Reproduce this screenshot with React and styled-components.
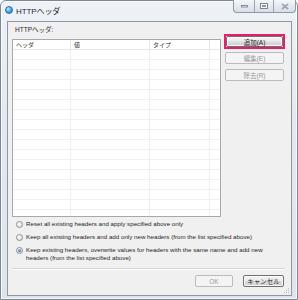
import React from 'react';
import styled, { createGlobalStyle } from 'styled-components';

const GlobalStyle = createGlobalStyle`
	html, body {
		margin: 0;
		padding: 0;
		background: #ffffff;
	}
	body {
		width: 298px;
		height: 300px;
		overflow: hidden;
		font-family: "Liberation Sans", "Noto Sans CJK JP", sans-serif;
	}
	* {
		box-sizing: border-box;
	}
`;

// Window frame (Aero, inactive)
const Window = styled.div`
	width: 298px;
	height: 300px;
	border: 1px solid #7d8893;
	border-radius: 6px 6px 0 0;
	background: linear-gradient(180deg, #eef2f7 0%, #e2e9f0 40%, #dde4ec 100%);
	box-shadow: inset 0 0 0 1px rgba(255, 255, 255, 0.7);
	display: flex;
	flex-direction: column;
	padding: 0 5px 3px 6px;
`;

const TitleBar = styled.div`
	height: 20px;
	display: flex;
	align-items: center;
`;

const TitleIcon = styled.span`
	width: 8px;
	height: 8px;
	border-radius: 50%;
	background: radial-gradient(circle at 35% 30%, #c9ecff 0%, #4fb0ec 45%, #1669b8 100%);
	border: 1px solid #2c6aa6;
	margin-left: -2px;
	margin-top: -2px;
`;

const TitleText = styled.span`
	font-size: 8px;
	color: #1f2a36;
	margin-left: 3px;
	margin-top: -2px;
	letter-spacing: -0.1px;
`;

const CaptionButtons = styled.div`
	margin-left: auto;
	margin-right: -4px;
	align-self: flex-start;
	margin-top: -1px;
	display: flex;
	height: 13px;
	border: 1px solid #8e9aa7;
	border-top: none;
	border-radius: 0 0 4px 4px;
	overflow: hidden;
	background: linear-gradient(180deg, #f4f7fa 0%, #e3e9ef 55%, #d6dee7 100%);
`;

const CaptionButton = styled.div`
	width: ${(p) => p.w}px;
	height: 100%;
	display: flex;
	align-items: center;
	justify-content: center;
	border-left: ${(p) => (p.first ? 'none' : '1px solid #9aa5b1')};
`;

// Client area
const Client = styled.div`
	flex: 1;
	border: 1px solid #8d98a4;
	background: #f0f0f0;
	display: flex;
	flex-direction: column;
	padding: 0 6px 0 4px;
	position: relative;
	font-size: 6px;
	color: #1e1e1e;
`;

const GroupLabel = styled.div`
	height: 17px;
	display: flex;
	align-items: center;
	padding: 0 0 3px 3px;
	font-size: 6.5px;
`;

const MainRow = styled.div`
	display: flex;
	align-items: flex-start;
	gap: 3px;
`;

const Table = styled.div`
	width: 209px;
	height: 178px;
	border: 1px solid #a3a9af;
	background: #ffffff;
	display: flex;
	flex-direction: column;
	overflow: hidden;
`;

const cols = '58px 79px 60px 1fr';

const HeaderRow = styled.div`
	display: grid;
	grid-template-columns: ${cols};
	height: 10px;
	border-bottom: 1px solid #e3e6ea;
	font-size: 6px;
	color: #333;
`;

const HeaderCell = styled.div`
	display: flex;
	align-items: center;
	padding-left: 3px;
	border-right: ${(p) => (p.last ? 'none' : '1px solid #e3e6ea')};
`;

const Row = styled.div`
	display: grid;
	grid-template-columns: ${cols};
	height: 10px;
	flex-shrink: 0;
	border-bottom: 1px solid #f0f0f0;
`;

const Cell = styled.div`
	border-right: ${(p) => (p.last ? 'none' : '1px solid #f0f0f0')};
`;

const ButtonColumn = styled.div`
	width: 61px;
	margin-top: -5px;
	display: flex;
	flex-direction: column;
	align-items: center;
`;

const Highlight = styled.div`
	width: 61px;
	height: 15px;
	border: 2px solid #e41d6c;
	display: flex;
	padding: 0 1px 0 0;
	margin-bottom: 3px;
`;

const Button = styled.div`
	width: ${(p) => p.w || 59}px;
	height: ${(p) => p.h || 12}px;
	border: 1px solid ${(p) => (p.disabled ? '#b8bcc0' : '#707070')};
	border-radius: 2px;
	background: ${(p) =>
		p.disabled
			? '#f4f4f4'
			: 'linear-gradient(180deg, #f2f2f2 0%, #ebebeb 48%, #dddddd 52%, #cfcfcf 100%)'};
	box-shadow: inset 0 0 0 1px ${(p) => (p.disabled ? '#f4f4f4' : 'rgba(255,255,255,0.8)')};
	color: ${(p) => (p.disabled ? '#9a9a9a' : '#1a1a1a')};
	font-size: 6.5px;
	display: flex;
	align-items: center;
	justify-content: center;
	margin-bottom: ${(p) => p.mb || 0}px;
	flex-shrink: 0;
`;

const RadioGroup = styled.div`
	margin-top: 3px;
	display: flex;
	flex-direction: column;
	gap: 5px;
	padding-left: 4px;
`;

const RadioRow = styled.div`
	display: flex;
	align-items: flex-start;
	line-height: 8px;
	font-size: 6.2px;
`;

const RadioDot = styled.span`
	width: 7px;
	height: 7px;
	flex-shrink: 0;
	border-radius: 50%;
	border: 1px solid #8f8f8f;
	background: radial-gradient(circle at 40% 35%, #ffffff 0%, #e6e6e6 60%, #d2d2d2 100%);
	margin-top: 0.5px;
	margin-right: 3px;
	display: flex;
	align-items: center;
	justify-content: center;
	&::after {
		content: '';
		display: ${(p) => (p.checked ? 'block' : 'none')};
		width: 3px;
		height: 3px;
		border-radius: 50%;
		background: radial-gradient(circle at 40% 35%, #8fc4f0 0%, #2a6bb5 70%, #1d4f8c 100%);
	}
`;

const Separator = styled.div`
	margin-top: 6px;
	height: 2px;
	border-top: 1px solid #d5d5d5;
	border-bottom: 1px solid #ffffff;
`;

const Footer = styled.div`
	margin-top: 5px;
	display: flex;
	justify-content: flex-end;
	gap: 10px;
	padding-right: 1px;
`;

const Grip = styled.svg`
	position: absolute;
	right: 1px;
	bottom: 1px;
`;

const headers = ['ヘッダ', '値', 'タイプ', ''];

const App = () => {
	const rows = Array.from({ length: 17 });

	return (
		<>
			<GlobalStyle />
			<Window>
				<TitleBar>
					<TitleIcon />
					<TitleText>HTTPヘッダ</TitleText>
					<CaptionButtons>
						<CaptionButton w={20} first>
							<svg width="7" height="4" viewBox="0 0 7 4">
								<rect x="0.5" y="1.5" width="6" height="1.5" fill="#f7f9fb" stroke="#6f7a86" strokeWidth="0.8" />
							</svg>
						</CaptionButton>
						<CaptionButton w={19}>
							<svg width="8" height="6" viewBox="0 0 8 6">
								<rect x="0.5" y="0.5" width="7" height="5" fill="#f7f9fb" stroke="#6f7a86" strokeWidth="0.9" />
								<rect x="2" y="2" width="4" height="2" fill="#8c96a1" />
							</svg>
						</CaptionButton>
						<CaptionButton w={22}>
							<svg width="8" height="7" viewBox="0 0 8 7">
								<path d="M1 1 L7 6 M7 1 L1 6" stroke="#6f7a86" strokeWidth="1.6" />
								<path d="M1 1 L7 6 M7 1 L1 6" stroke="#e9edf1" strokeWidth="0.5" />
							</svg>
						</CaptionButton>
					</CaptionButtons>
				</TitleBar>

				<Client>
					<GroupLabel>HTTPヘッダ:</GroupLabel>
					<MainRow>
						<Table>
							<HeaderRow>
								{headers.map((h, i) => (
									<HeaderCell key={i} last={i === headers.length - 1}>
										{h}
									</HeaderCell>
								))}
							</HeaderRow>
							{rows.map((_, r) => (
								<Row key={r}>
									{headers.map((h, i) => (
										<Cell key={i} last={i === headers.length - 1} />
									))}
								</Row>
							))}
						</Table>
						<ButtonColumn>
							<Highlight>
								<Button w={57} h={11}>追加(A)</Button>
							</Highlight>
							<Button disabled mb={5}>編集(E)</Button>
							<Button disabled>除去(R)</Button>
						</ButtonColumn>
					</MainRow>

					<RadioGroup>
						<RadioRow>
							<RadioDot />
							<span>Reset all existing headers and apply specified above only</span>
						</RadioRow>
						<RadioRow>
							<RadioDot />
							<span>Keep all existing headers and add only new headers (from the list specified above)</span>
						</RadioRow>
						<RadioRow>
							<RadioDot checked />
							<span>
								Keep existing headers, overwrite values for headers with the same name and add new
								<br />
								headers (from the list specified above)
							</span>
						</RadioRow>
					</RadioGroup>

					<Separator />

					<Footer>
						<Button disabled w={38} h={12}>OK</Button>
						<Button w={41} h={12}>キャンセル</Button>
					</Footer>

					<Grip width="6" height="6" viewBox="0 0 6 6">
						<rect x="4" y="0" width="1" height="1" fill="#b9b9b9" />
						<rect x="2" y="2" width="1" height="1" fill="#b9b9b9" />
						<rect x="4" y="2" width="1" height="1" fill="#b9b9b9" />
						<rect x="0" y="4" width="1" height="1" fill="#b9b9b9" />
						<rect x="2" y="4" width="1" height="1" fill="#b9b9b9" />
						<rect x="4" y="4" width="1" height="1" fill="#b9b9b9" />
					</Grip>
				</Client>
			</Window>
		</>
	);
};

export default App;
